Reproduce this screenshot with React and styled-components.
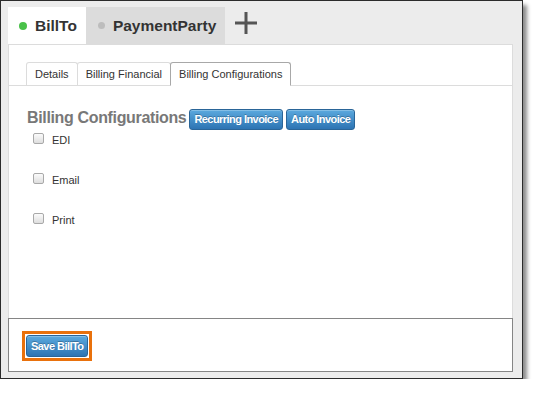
import React from "react";
import styled, { createGlobalStyle } from "styled-components";

const GlobalStyle = createGlobalStyle`
  body {
    margin: 0;
    background: #fff;
    font-family: "Liberation Sans", Arial, sans-serif;
  }
`;

const Frame = styled.div`
  width: 505px;
  height: 365px;
  padding: 6px 9px 6px 7px;
  background: #ececec;
  border: 1px solid #2b2b2b;
  box-shadow: 4px 5px 4px rgba(0, 0, 0, 0.45);
  display: flex;
  flex-direction: column;
`;

const TabBar = styled.div`
  display: flex;
  align-items: stretch;
  height: 39px;
`;

const Tab = styled.div`
  display: flex;
  align-items: center;
  gap: 8px;
  padding: 0 9px 0 ${(p) => (p.$active ? "11px" : "12px")};
  background: ${(p) => (p.$active ? "#fff" : "#dcdcdc")};
  font-size: 15.5px;
  font-weight: bold;
  color: #333;
`;

const Dot = styled.span`
  width: ${(p) => p.$size}px;
  height: ${(p) => p.$size}px;
  border-radius: 50%;
  background: ${(p) => p.$color};
  flex-shrink: 0;
`;

const AddButton = styled.div`
  display: flex;
  align-items: center;
  margin-left: 10px;
  padding-bottom: 6px;
`;

const Panel = styled.div`
  height: 269px;
  background: #fff;
  border: 1px solid #dcdcdc;
  border-bottom: none;
  padding-top: 17px;
`;

const SubTabs = styled.div`
  display: flex;
  padding-left: 18px;
  border-bottom: 1px solid #dcdcdc;
  height: 23px;
`;

const SubTab = styled.div`
  height: 22px;
  line-height: 22px;
  padding: 0 8px;
  font-size: 11px;
  color: #333;
  border: 1px solid ${(p) => (p.$active ? "#a8a8a8" : "#dcdcdc")};
  border-bottom: ${(p) => (p.$active ? "1px solid #fff" : "none")};
  border-radius: 3px 3px 0 0;
  background: #fff;
  margin-left: -1px;
`;

const Body = styled.div`
  padding: 21px 0 0 18px;
`;

const TitleRow = styled.div`
  display: flex;
  align-items: baseline;
  gap: 3px;
`;

const Title = styled.h2`
  margin: 0;
  font-size: 16px;
  letter-spacing: -0.35px;
  font-weight: bold;
  color: #787878;
  line-height: 21px;
`;

const BlueButton = styled.button`
  font-family: "Liberation Sans", Arial, sans-serif;
  font-size: 11px;
  font-weight: bold;
  letter-spacing: -0.55px;
  color: #fff;
  height: ${(p) => p.$h || 21}px;
  padding: 0 4px;
  border: 1px solid #2a6598;
  border-radius: 3px;
  background: linear-gradient(#5ba9de, #2d74b3);
  text-shadow: 0 -1px 0 rgba(0, 0, 0, 0.25);
  box-shadow: inset 0 1px 0 rgba(255, 255, 255, 0.25);
`;

const Options = styled.div`
  display: flex;
  flex-direction: column;
  gap: 29px;
  padding: 3px 0 0 6px;
`;

const Option = styled.label`
  display: flex;
  align-items: flex-start;
  gap: 8px;
  font-size: 11px;
  color: #333;
  height: 11px;
`;

const Check = styled.input.attrs({ type: "checkbox" })`
  appearance: none;
  margin: 0;
  width: 11px;
  height: 11px;
  border: 1px solid #a9a9a9;
  border-radius: 2px;
  background: linear-gradient(#fbfbfb, #dedede);
`;

const OptionText = styled.span`
  padding-top: 2px;
  line-height: 11px;
`;

const Footer = styled.div`
  background: #fff;
  border: 1px solid #858585;
  padding: 12px 0 0 13px;
  box-sizing: border-box;
  height: 56px;
`;

const Highlight = styled.div`
  display: inline-flex;
  border: 3px solid #e9710c;
  padding: 1px;
  background: #fff;
`;

export default function App() {
  return (
    <>
      <GlobalStyle />
      <Frame>
        <TabBar>
          <Tab $active>
            <Dot $size={8} $color="#49c149" />
            BillTo
          </Tab>
          <Tab>
            <Dot $size={7} $color="#bdbdbd" />
            PaymentParty
          </Tab>
          <AddButton>
            <svg width="22" height="22" viewBox="0 0 22 22">
              <rect x="9.5" y="0" width="3" height="22" fill="#555" />
              <rect x="0" y="9.5" width="22" height="3" fill="#555" />
            </svg>
          </AddButton>
        </TabBar>
        <Panel>
          <SubTabs>
            <SubTab>Details</SubTab>
            <SubTab>Billing Financial</SubTab>
            <SubTab $active>Billing Configurations</SubTab>
          </SubTabs>
          <Body>
            <TitleRow>
              <Title>Billing Configurations</Title>
              <BlueButton>Recurring Invoice</BlueButton>
              <BlueButton>Auto Invoice</BlueButton>
            </TitleRow>
            <Options>
              {["EDI", "Email", "Print"].map((o) => (
                <Option key={o}>
                  <Check />
                  <OptionText>{o}</OptionText>
                </Option>
              ))}
            </Options>
          </Body>
        </Panel>
        <Footer>
          <Highlight>
            <BlueButton $h={22}>Save BillTo</BlueButton>
          </Highlight>
        </Footer>
      </Frame>
    </>
  );
}
